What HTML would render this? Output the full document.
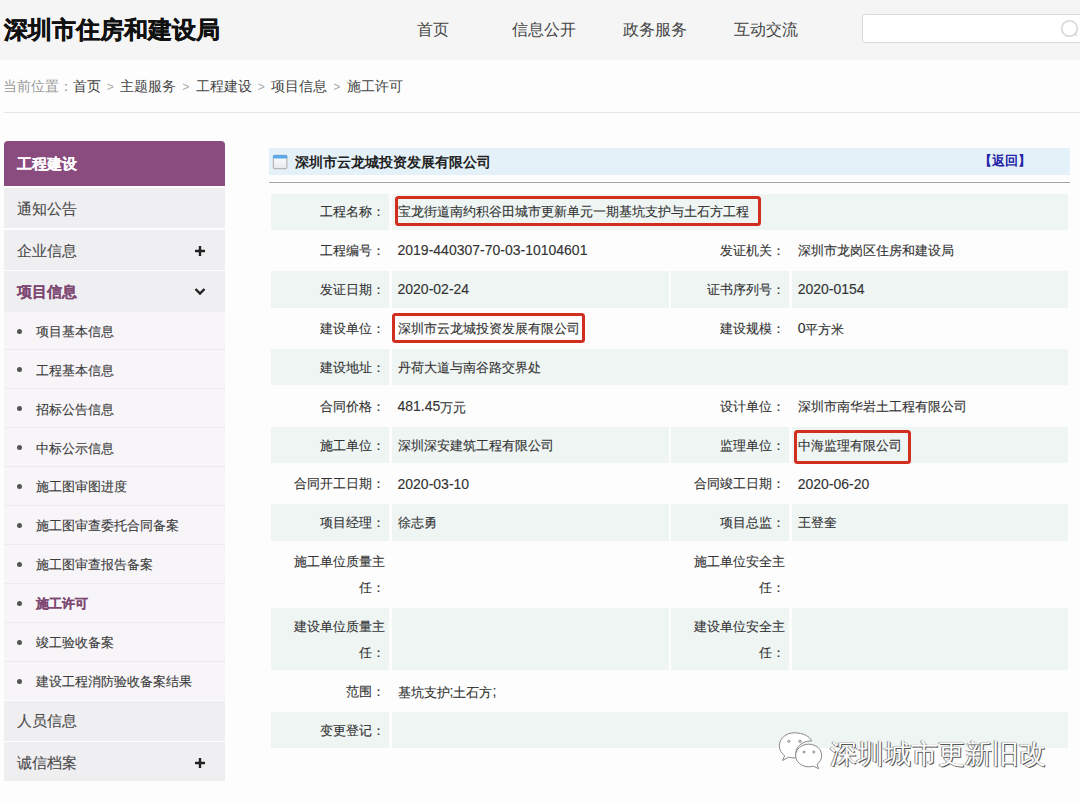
<!DOCTYPE html>
<html><head><meta charset="utf-8">
<style>
*{margin:0;padding:0;box-sizing:border-box}
html,body{width:1080px;height:802px;overflow:hidden;background:#fdfdfd;font-family:"Liberation Sans",sans-serif;color:#333}
.a{position:absolute;white-space:nowrap}
#hd{position:absolute;left:0;top:0;width:1080px;height:60px;background:#f5f5f6}
#logo{left:4px;top:14px;font-size:24px;font-weight:bold;color:#111;line-height:32px;-webkit-text-stroke:0.4px #111}
.nav{top:18.5px;font-size:16px;margin-left:0.7px;color:#444;line-height:22px;width:100px;text-align:center}
#search{left:862px;top:14px;width:240px;height:29px;border:1px solid #d9d9d9;border-radius:3px;background:#fff}
#crumb{left:2.5px;top:76px;font-size:14px;line-height:20px;color:#444}
#crumb .g{color:#999}
#crumb .s{display:inline-block;width:19.5px;text-align:center;color:#aaa;font-size:12px}
#hr{left:4px;top:112px;width:1076px;height:1px;background:#e6e6e6}
/* sidebar */
.sb{position:absolute;left:4px;width:221px;background:#efeef1}
.sb .t{position:absolute;left:13px;margin-top:0.7px;font-size:15px;color:#4a4a4a;-webkit-text-stroke:0.1px currentColor}
#sbh{top:141px;height:45.3px;background:#8a4c7e;border-radius:4px 4px 0 0}
.sub{position:absolute;left:4px;width:221px;height:38.9px;background:#f7f5f8;border-bottom:1px solid #ebeaec}
.sub i{position:absolute;left:13.3px;top:17px;width:5px;height:5px;border-radius:50%;background:#555}
.sub span{position:absolute;left:32px;top:11.4px;font-size:13px;line-height:18px;color:#3c3c3c;-webkit-text-stroke:0.12px currentColor}
/* main */
#tbar{left:269px;top:148px;width:801px;height:26.8px;background:#e4f1f8}
#tline{left:269px;top:181.6px;width:801px;height:1.6px;background:#a4a4a4}
.c{position:absolute;font-size:13px;line-height:26px;}
.c .n{font-size:14px;position:relative;top:-0.6px}
.c>span.w{position:relative;top:0.7px}
.sh{background:#eef5f3}
.lb{text-align:right;padding-right:4px;color:#333;-webkit-text-stroke:0.12px #333}
.vl{padding-left:6px;color:#333;-webkit-text-stroke:0.12px #333}
.rb{position:absolute;border:3px solid #d22e20;border-radius:3.5px}
</style></head><body>
<div id="hd"></div>
<div class="a" id="logo">深圳市住房和建设局</div>
<div class="a nav" style="left:382px">首页</div>
<div class="a nav" style="left:493px">信息公开</div>
<div class="a nav" style="left:604px">政务服务</div>
<div class="a nav" style="left:715px">互动交流</div>
<div class="a" id="search"></div>
<svg class="a" style="left:1058px;top:17px" width="22" height="24" viewBox="0 0 22 24"><circle cx="11.5" cy="11.5" r="7.8" fill="none" stroke="#d4d4d4" stroke-width="1.5"/><path d="M17 17l1.8 1.8" stroke="#d4d4d4" stroke-width="1.5"/></svg>
<div class="a" id="crumb"><span class="g">当前位置：</span>首页<span class="s">&gt;</span>主题服务<span class="s">&gt;</span>工程建设<span class="s">&gt;</span>项目信息<span class="s">&gt;</span>施工许可</div>
<div class="a" id="hr"></div>

<!-- sidebar -->
<div class="sb" id="sbh"><div class="t" style="top:12px;color:#fff;font-weight:bold;line-height:20px">工程建设</div></div>
<div class="sb" style="top:188px;height:40px"><div class="t" style="top:10px;line-height:20px">通知公告</div></div>
<div class="sb" style="top:230px;height:39.5px"><div class="t" style="top:10px;line-height:20px">企业信息</div>
<svg style="position:absolute;left:190px;top:15px" width="12" height="12" viewBox="0 0 12 12"><path d="M6 1v10M1 6h10" stroke="#222" stroke-width="2.4"/></svg></div>
<div class="sb" style="top:271px;height:40.5px"><div class="t" style="top:10px;line-height:20px;color:#7d4872;font-weight:bold">项目信息</div>
<svg style="position:absolute;left:190px;top:16px" width="12" height="9" viewBox="0 0 12 9"><path d="M1.5 2l4.5 4.5 4.5-4.5" fill="none" stroke="#222" stroke-width="2.4"/></svg></div>
<div class="sub" style="top:311.5px"><i></i><span>项目基本信息</span></div>
<div class="sub" style="top:350.4px"><i></i><span>工程基本信息</span></div>
<div class="sub" style="top:389.3px"><i></i><span>招标公告信息</span></div>
<div class="sub" style="top:428.2px"><i></i><span>中标公示信息</span></div>
<div class="sub" style="top:467.1px"><i></i><span>施工图审图进度</span></div>
<div class="sub" style="top:506px"><i></i><span>施工图审查委托合同备案</span></div>
<div class="sub" style="top:544.9px"><i></i><span>施工图审查报告备案</span></div>
<div class="sub" style="top:583.8px"><i></i><span style="color:#7d4872;font-weight:bold">施工许可</span></div>
<div class="sub" style="top:622.7px"><i></i><span>竣工验收备案</span></div>
<div class="sub" style="top:661.6px;border-bottom:0"><i></i><span>建设工程消防验收备案结果</span></div>
<div class="sb" style="top:701px;height:39.5px"><div class="t" style="top:9.4px;line-height:20px">人员信息</div></div>
<div class="sb" style="top:742px;height:39px"><div class="t" style="top:10px;line-height:20px">诚信档案</div>
<svg style="position:absolute;left:190px;top:15px" width="12" height="12" viewBox="0 0 12 12"><path d="M6 1v10M1 6h10" stroke="#222" stroke-width="2.4"/></svg></div>

<!-- main -->
<div class="a" id="tbar"></div>
<div class="a" id="tline"></div>
<svg class="a" style="left:272px;top:154px" width="16" height="16" viewBox="0 0 16 16"><defs><linearGradient id="ig" x1="0" y1="0" x2="0" y2="1"><stop offset="0" stop-color="#fff"/><stop offset="1" stop-color="#e6e8ea"/></linearGradient></defs><rect x="1.3" y="1.3" width="13.6" height="13.4" rx="1" fill="url(#ig)" stroke="#a8a8a8" stroke-width="1"/><rect x="1" y="1" width="14.2" height="3.6" rx="1" fill="#5ea8e8"/></svg>
<div class="a" style="left:295px;top:152px;font-size:14px;line-height:20px;font-weight:bold;color:#222">深圳市云龙城投资发展有限公司</div>
<div class="a" style="left:979px;top:152px;font-size:13px;line-height:18px;font-weight:bold;color:#2424a8">【返回】</div>

<!--TBL-->
<div class="c lb sh" style="left:271.0px;top:193.80px;width:118.4px;height:35.9px;padding-top:4.95px;white-space:nowrap"><span class="w">工程名称：</span></div>
<div class="c vl sh" style="left:391.5px;top:193.80px;width:676.7px;height:35.9px;padding-top:4.95px;white-space:nowrap"><span class="w">宝龙街道南约积谷田城市更新单元一期基坑支护与土石方工程</span></div>
<div class="c lb" style="left:271.0px;top:232.10px;width:118.4px;height:36.5px;padding-top:5.25px;white-space:nowrap"><span class="w">工程编号：</span></div>
<div class="c vl" style="left:391.5px;top:232.10px;width:277.3px;height:36.5px;padding-top:5.25px;white-space:nowrap"><span class="w"><span class="n">2019-440307-70-03-10104601</span></span></div>
<div class="c lb" style="left:671.0px;top:232.10px;width:118.4px;height:36.5px;padding-top:5.25px;white-space:nowrap"><span class="w">发证机关：</span></div>
<div class="c vl" style="left:791.7px;top:232.10px;width:276.5px;height:36.5px;padding-top:5.25px;white-space:nowrap"><span class="w">深圳市龙岗区住房和建设局</span></div>
<div class="c lb sh" style="left:271.0px;top:271.00px;width:118.4px;height:36.5px;padding-top:5.25px;white-space:nowrap"><span class="w">发证日期：</span></div>
<div class="c vl sh" style="left:391.5px;top:271.00px;width:277.3px;height:36.5px;padding-top:5.25px;white-space:nowrap"><span class="w"><span class="n">2020-02-24</span></span></div>
<div class="c lb sh" style="left:671.0px;top:271.00px;width:118.4px;height:36.5px;padding-top:5.25px;white-space:nowrap"><span class="w">证书序列号：</span></div>
<div class="c vl sh" style="left:791.7px;top:271.00px;width:276.5px;height:36.5px;padding-top:5.25px;white-space:nowrap"><span class="w"><span class="n">2020-0154</span></span></div>
<div class="c lb" style="left:271.0px;top:309.90px;width:118.4px;height:36.5px;padding-top:5.25px;white-space:nowrap"><span class="w">建设单位：</span></div>
<div class="c vl" style="left:391.5px;top:309.90px;width:277.3px;height:36.5px;padding-top:5.25px;white-space:nowrap"><span class="w">深圳市云龙城投资发展有限公司</span></div>
<div class="c lb" style="left:671.0px;top:309.90px;width:118.4px;height:36.5px;padding-top:5.25px;white-space:nowrap"><span class="w">建设规模：</span></div>
<div class="c vl" style="left:791.7px;top:309.90px;width:276.5px;height:36.5px;padding-top:5.25px;white-space:nowrap"><span class="w"><span class="n">0</span>平方米</span></div>
<div class="c lb sh" style="left:271.0px;top:348.80px;width:118.4px;height:36.5px;padding-top:5.25px;white-space:nowrap"><span class="w">建设地址：</span></div>
<div class="c vl sh" style="left:391.5px;top:348.80px;width:676.7px;height:36.5px;padding-top:5.25px;white-space:nowrap"><span class="w">丹荷大道与南谷路交界处</span></div>
<div class="c lb" style="left:271.0px;top:387.70px;width:118.4px;height:36.5px;padding-top:5.25px;white-space:nowrap"><span class="w">合同价格：</span></div>
<div class="c vl" style="left:391.5px;top:387.70px;width:277.3px;height:36.5px;padding-top:5.25px;white-space:nowrap"><span class="w"><span class="n">481.45</span>万元</span></div>
<div class="c lb" style="left:671.0px;top:387.70px;width:118.4px;height:36.5px;padding-top:5.25px;white-space:nowrap"><span class="w">设计单位：</span></div>
<div class="c vl" style="left:791.7px;top:387.70px;width:276.5px;height:36.5px;padding-top:5.25px;white-space:nowrap"><span class="w">深圳市南华岩土工程有限公司</span></div>
<div class="c lb sh" style="left:271.0px;top:426.60px;width:118.4px;height:36.5px;padding-top:5.25px;white-space:nowrap"><span class="w">施工单位：</span></div>
<div class="c vl sh" style="left:391.5px;top:426.60px;width:277.3px;height:36.5px;padding-top:5.25px;white-space:nowrap"><span class="w">深圳深安建筑工程有限公司</span></div>
<div class="c lb sh" style="left:671.0px;top:426.60px;width:118.4px;height:36.5px;padding-top:5.25px;white-space:nowrap"><span class="w">监理单位：</span></div>
<div class="c vl sh" style="left:791.7px;top:426.60px;width:276.5px;height:36.5px;padding-top:5.25px;white-space:nowrap"><span class="w">中海监理有限公司</span></div>
<div class="c lb" style="left:271.0px;top:465.50px;width:118.4px;height:36.5px;padding-top:5.25px;white-space:nowrap"><span class="w">合同开工日期：</span></div>
<div class="c vl" style="left:391.5px;top:465.50px;width:277.3px;height:36.5px;padding-top:5.25px;white-space:nowrap"><span class="w"><span class="n">2020-03-10</span></span></div>
<div class="c lb" style="left:671.0px;top:465.50px;width:118.4px;height:36.5px;padding-top:5.25px;white-space:nowrap"><span class="w">合同竣工日期：</span></div>
<div class="c vl" style="left:791.7px;top:465.50px;width:276.5px;height:36.5px;padding-top:5.25px;white-space:nowrap"><span class="w"><span class="n">2020-06-20</span></span></div>
<div class="c lb sh" style="left:271.0px;top:504.40px;width:118.4px;height:36.5px;padding-top:5.25px;white-space:nowrap"><span class="w">项目经理：</span></div>
<div class="c vl sh" style="left:391.5px;top:504.40px;width:277.3px;height:36.5px;padding-top:5.25px;white-space:nowrap"><span class="w">徐志勇</span></div>
<div class="c lb sh" style="left:671.0px;top:504.40px;width:118.4px;height:36.5px;padding-top:5.25px;white-space:nowrap"><span class="w">项目总监：</span></div>
<div class="c vl sh" style="left:791.7px;top:504.40px;width:276.5px;height:36.5px;padding-top:5.25px;white-space:nowrap"><span class="w">王登奎</span></div>
<div class="c lb" style="left:271.0px;top:543.30px;width:118.4px;height:62.3px;padding-top:5.15px;white-space:normal"><span class="w">施工单位质量主任：</span></div>
<div class="c vl" style="left:391.5px;top:543.30px;width:277.3px;height:62.3px;padding-top:5.15px;white-space:nowrap"><span class="w"></span></div>
<div class="c lb" style="left:671.0px;top:543.30px;width:118.4px;height:62.3px;padding-top:5.15px;white-space:normal"><span class="w">施工单位安全主任：</span></div>
<div class="c vl" style="left:791.7px;top:543.30px;width:276.5px;height:62.3px;padding-top:5.15px;white-space:nowrap"><span class="w"></span></div>
<div class="c lb sh" style="left:271.0px;top:608.00px;width:118.4px;height:62.3px;padding-top:5.15px;white-space:normal"><span class="w">建设单位质量主任：</span></div>
<div class="c vl sh" style="left:391.5px;top:608.00px;width:277.3px;height:62.3px;padding-top:5.15px;white-space:nowrap"><span class="w"></span></div>
<div class="c lb sh" style="left:671.0px;top:608.00px;width:118.4px;height:62.3px;padding-top:5.15px;white-space:normal"><span class="w">建设单位安全主任：</span></div>
<div class="c vl sh" style="left:791.7px;top:608.00px;width:276.5px;height:62.3px;padding-top:5.15px;white-space:nowrap"><span class="w"></span></div>
<div class="c lb" style="left:271.0px;top:672.70px;width:118.4px;height:36.5px;padding-top:5.25px;white-space:nowrap"><span class="w">范围：</span></div>
<div class="c vl" style="left:391.5px;top:672.70px;width:676.7px;height:36.5px;padding-top:5.25px;white-space:nowrap"><span class="w">基坑支护<span class="n">;</span>土石方<span class="n">;</span></span></div>
<div class="c lb sh" style="left:271.0px;top:711.60px;width:118.4px;height:36.5px;padding-top:5.25px;white-space:nowrap"><span class="w">变更登记：</span></div>
<div class="c vl sh" style="left:391.5px;top:711.60px;width:676.7px;height:36.5px;padding-top:5.25px;white-space:nowrap"><span class="w"></span></div>
<div class="rb" style="left:394.5px;top:196px;width:366.2px;height:30.1px"></div>
<div class="rb" style="left:392.2px;top:313.2px;width:193.1px;height:30px"></div>
<div class="rb" style="left:793.6px;top:429.8px;width:117.5px;height:34.1px"></div>
<!--/TBL-->
<!-- watermark -->
<svg class="a" style="left:776px;top:730px" width="50" height="44" viewBox="0 0 50 44">
<g fill="#fff" stroke="#888" stroke-width="1">
<path d="M18.2 2.8C10 2.8 3.3 8.6 3.3 15.8c0 4 2.1 7.5 5.4 9.9l-2.2 4.8 6.2-3.4c1.6.5 3.4.8 5.3.8.9 0 1.5 0 2.3-.2-.4-1.2-.6-2.5-.6-3.8 0-7.2 6.6-12.9 14.8-12.9.4 0 .7 0 1.1.1C34 6.4 26.8 2.8 18.2 2.8z"/>
<path d="M32.8 14.2c-7.3 0-13.2 5-13.2 11.3s5.9 11.3 13.2 11.3c1.6 0 3.1-.2 4.5-.7l5.3 2.6-1.6-4.4c2.8-2.1 4.7-5.2 4.7-8.8 0-6.3-5.8-11.3-12.9-11.3z"/>
</g>
<g fill="none" stroke="#777" stroke-width="0.9"><circle cx="12.8" cy="11.3" r="1.1"/><circle cx="24" cy="11.3" r="1.1"/><circle cx="28.1" cy="22" r="1"/><circle cx="37.8" cy="22" r="1"/></g>
</svg>
<div class="a" style="left:830px;top:735.5px;font-size:27px;line-height:36px;color:#fff;text-shadow:0.8px 0.8px 0 #555,-0.8px 0.3px 0 #8a8a8a,0 0 1px #777">深圳城市更新旧改</div>
</body></html>
